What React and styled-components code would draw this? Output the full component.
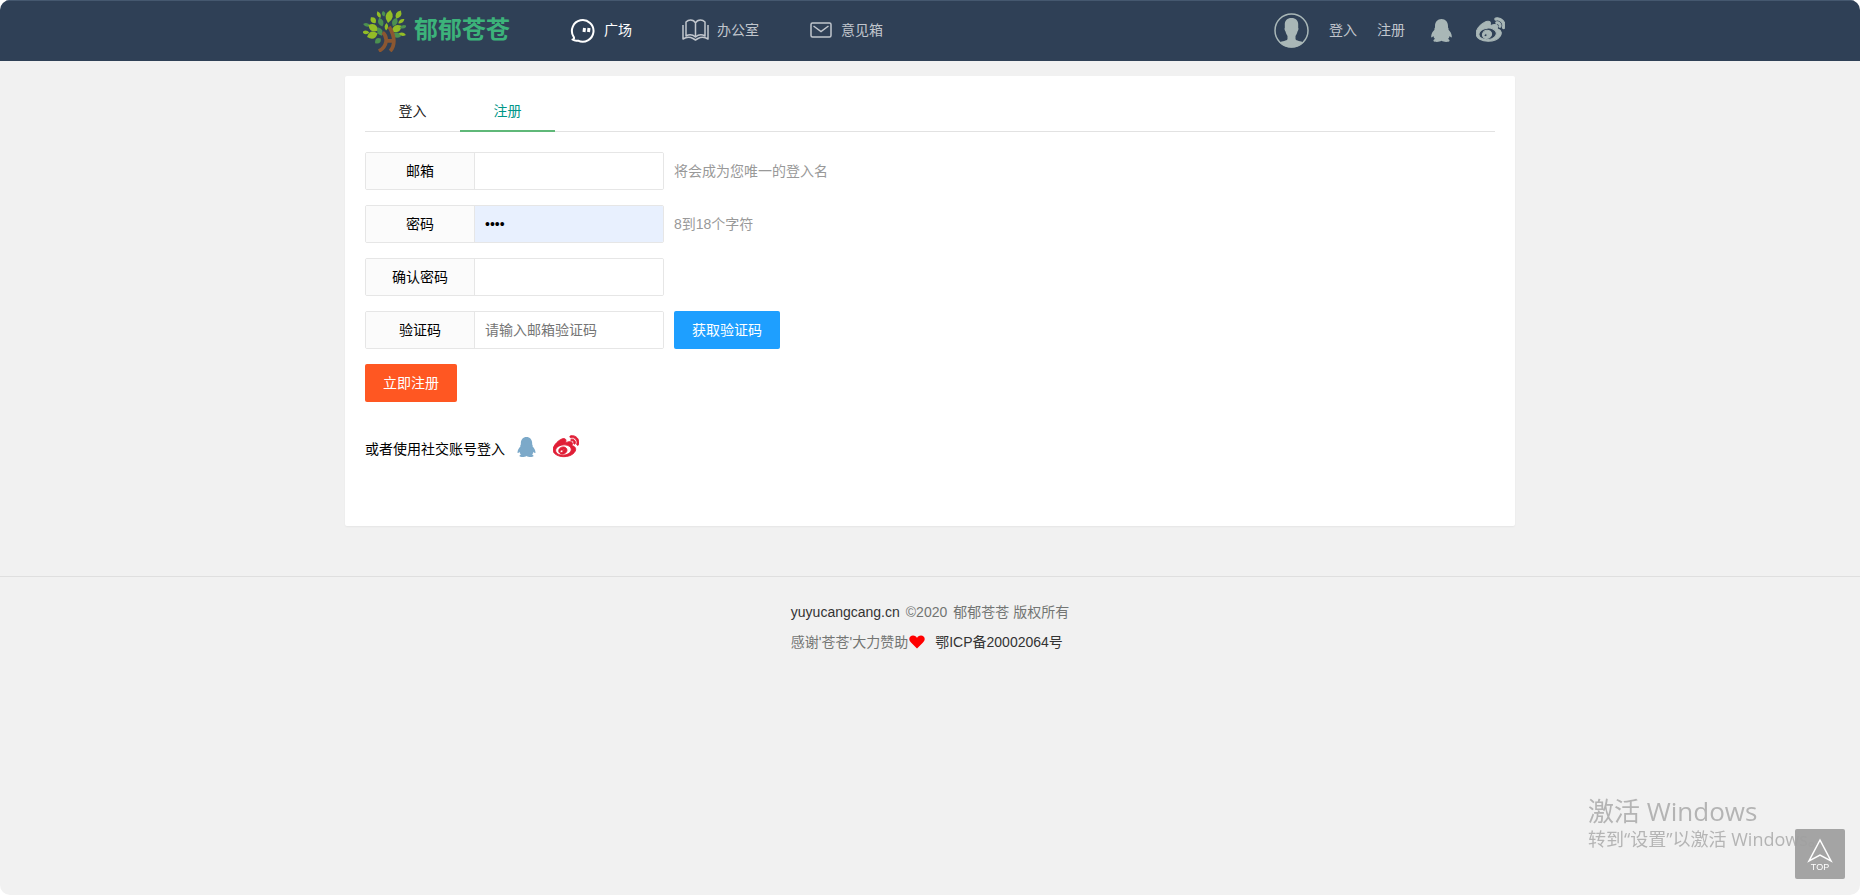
import React from 'react';
import styled, { createGlobalStyle } from 'styled-components';
import { FaWeibo } from 'react-icons/fa';

const Global = createGlobalStyle`
  * { box-sizing: border-box; }
  body {
    margin: 0;
    background: #fff;
    color: #000;
    font: 14px/24px "Liberation Sans", "Noto Sans CJK SC", sans-serif;
  }
  a { color: inherit; text-decoration: none; }
  button, input { font: inherit; }
`;

const Page = styled.div`
  min-height: 100vh;
  display: flex;
  flex-direction: column;
  background: #f1f1f1;
  border-radius: 10px;
  overflow: hidden;
`;

const Header = styled.header`
  background: #2f4056;
  border-top: 1px solid #45586f;
`;

const Container = styled.div`
  width: 100%;
  max-width: 1170px;
  margin: 0 auto;
`;

const HeaderBar = styled(Container)`
  height: 60px;
  padding: 0 10px 2px 18px;
  display: flex;
  align-items: center;
  justify-content: space-between;
`;

const Group = styled.div`
  display: flex;
  align-items: center;
`;

const Logo = styled.a`
  display: flex;
  align-items: center;
  gap: 8px;
  margin-right: 60px;
  color: #3cb37a;
  font-size: 24px;
  font-weight: 700;
  line-height: 36px;
`;

const Nav = styled.nav`
  display: flex;
  align-items: center;
  gap: 50px;
`;

const NavLink = styled.a`
  display: flex;
  align-items: center;
  gap: 8px;
  color: ${(p) => (p.$active ? '#fff' : '#c1c6cd')};
`;

const UserNav = styled.nav`
  display: flex;
  align-items: center;
  gap: 20px;
  color: #c1c6cd;
`;

const IconLink = styled.a`
  display: flex;
  color: ${(p) => p.$color || '#a9b7b7'};
`;

const SocialIcons = styled.div`
  display: flex;
  align-items: center;
  gap: ${(p) => p.$gap};
`;

const HeaderSocial = styled(SocialIcons)`
  padding-left: 6px;
`;

const Panel = styled(Container).attrs({ as: 'main' })`
  min-height: 450px;
  margin-top: 15px;
  padding: 15px 20px;
  background: #fff;
  border-radius: 2px;
  box-shadow: 0 1px 2px rgba(0, 0, 0, 0.05);
`;

const Tabs = styled.nav`
  display: flex;
  height: 41px;
  border-bottom: 1px solid #e2e2e2;
`;

const Tab = styled.a`
  width: 95px;
  height: 41px;
  line-height: 40px;
  text-align: center;
  color: ${(p) => (p.$active ? '#009688' : '#222')};
  border-bottom: ${(p) => (p.$active ? '2px solid #5fb878' : '0')};
`;

const Form = styled.form`
  display: flex;
  flex-direction: column;
  align-items: flex-start;
  gap: 15px;
  padding-top: 20px;
`;

const Row = styled.div`
  display: flex;
  align-items: center;
  gap: 10px;
`;

const Field = styled.div`
  display: flex;
  width: 299px;
  height: 38px;
  border: 1px solid #e6e6e6;
  border-radius: 2px;
  overflow: hidden;
`;

const Label = styled.label`
  width: 109px;
  flex: none;
  line-height: 36px;
  text-align: center;
  background: #fbfbfb;
  border-right: 1px solid #e6e6e6;
`;

const Input = styled.input`
  flex: 1;
  min-width: 0;
  border: 0;
  outline: 0;
  padding: 0 10px;
  background: ${(p) => (p.$filled ? '#e8f0fe' : '#fff')};
  &::placeholder { color: #757575; }
`;

const Hint = styled.span`
  color: #999;
`;

const Button = styled.button`
  height: 38px;
  padding: 0 18px;
  border: 0;
  border-radius: 2px;
  color: #fff;
  background: ${(p) => p.$color};
  cursor: pointer;
`;

const Social = styled.div`
  display: flex;
  align-items: flex-start;
  gap: 12px;
  padding-top: 17px;
  line-height: 30px;
`;

const Footer = styled.footer`
  margin-top: 50px;
  padding: 20px 15px;
  border-top: 1px solid #dfdfdf;
  display: flex;
  justify-content: center;
  color: #737573;
  line-height: 30px;
`;

const FooterLine = styled.div`
  display: flex;
  align-items: center;
  gap: ${(p) => p.$gap || '6px'};
  a { color: #333; }
`;

const Thanks = styled.span`
  display: flex;
  align-items: center;
  gap: 1px;
`;

const Watermark = styled.aside`
  position: fixed;
  right: 38px;
  bottom: 44px;
  width: 234px;
  color: #b4b4b4;
  font-family: "Open Sans", "Noto Sans CJK SC", sans-serif;
  white-space: nowrap;
  pointer-events: none;
`;

const WatermarkTitle = styled.div`
  font-size: 26px;
  line-height: 32px;
`;

const WatermarkText = styled.div`
  font-size: 18px;
  line-height: 24px;
`;

const TopButton = styled.button`
  position: fixed;
  right: 15px;
  bottom: 16px;
  width: 50px;
  height: 50px;
  padding: 0;
  border: 0;
  border-radius: 2px;
  background: rgba(159, 159, 159, 0.95);
  color: #fff;
  display: flex;
  flex-direction: column;
  align-items: center;
  justify-content: center;
  font-size: 9px;
  line-height: 8px;
  cursor: pointer;
`;

const leaves = [
  [28, 8, 10, 4, 7, 1], [17, 6, -25, 2, 4, 1], [38, 6, 30, 3, 5, 1], [11, 12, -40, 3, 4, 1],
  [19, 14, -20, 3, 5, 0], [34, 14, 25, 3, 5, 0], [41, 13, 55, 2, 4, 1], [4, 17, -75, 2, 4, 0],
  [11, 20, -60, 4, 6, 1], [3, 25, -85, 2, 4, 1], [10, 28, -110, 4, 6, 1], [18, 24, -25, 3, 5, 0],
  [36, 21, 60, 4, 6, 1], [43, 19, 75, 2, 4, 0], [36, 28, 100, 3, 5, 0], [42, 27, 100, 2, 4, 1],
  [16, 34, -130, 3, 4, 0], [25, 19, 5, 2, 4, 1], [22, 5, -12, 2, 3, 0],
];

const Tree = () => (
  <svg width="43" height="43" viewBox="0 0 46 46" aria-hidden="true">
    {leaves.map(([x, y, r, w, h, light]) => (
      <path
        key={`${x}-${y}`}
        transform={`translate(${x} ${y}) rotate(${r})`}
        d={`M0 ${-h}Q${w * 1.9} 0 0 ${h}Q${-w * 1.9} 0 0 ${-h}Z`}
        fill={light ? '#93bd26' : '#4c9150'}
      />
    ))}
    <path d="M21 25C27 30 26 40 17 45M28 19C31 24 33 29 33 34C33 39 31 43 29 45M24 34H33" fill="none" stroke="#8b5731" strokeWidth="4" />
  </svg>
);

const Chat = () => (
  <svg width="26" height="25" viewBox="0 0 26 25" aria-hidden="true">
    <path d="M3.500 18.500A10.800 10.800 0 1 1 8 22.600Q5 23.300 2.500 21.500Q5 21 3.500 18.500" fill="none" stroke="#fff" strokeWidth="2" strokeLinejoin="round" />
    <path d="M14.500 10L14 14M19 10L18.500 14" stroke="#fff" strokeWidth="3" />
  </svg>
);

const Book = () => (
  <svg width="27" height="22" viewBox="0 0 27 22" fill="none" stroke="#c1c6cd" strokeWidth="1.500" strokeLinejoin="round" aria-hidden="true">
    <path d="M13.500 4Q12 1 8.500 1Q6 1 4 3V17Q9 14 13.500 18Q18 14 23 17V3Q21 1 18.500 1Q15 1 13.500 4V18" />
    <path d="M1 6V20Q6 17 11 19.500L13.500 21L16 19.500Q21 17 26 20V6" />
  </svg>
);

const Mail = () => (
  <svg width="24" height="16" viewBox="0 0 24 16" fill="none" stroke="#c1c6cd" strokeWidth="1.500" aria-hidden="true">
    <rect x="2" y="1" width="20" height="14" rx="1.500" />
    <path d="M4.500 4L12 9.500L19.500 4" />
  </svg>
);

const Avatar = () => (
  <svg width="35" height="35" viewBox="0 0 35 35" aria-hidden="true">
    <circle cx="17.500" cy="17.500" r="16.500" fill="none" stroke="#a9b7b7" strokeWidth="1.500" />
    <path d="M17.500 5C22 5 24.500 8 24.200 12V15C25 15.500 24 18 23.500 18.500C23 21 22 22 21.500 23V26C22 28 27 28 29.500 29.500A17 17 0 0 1 5.500 29.500C8 28 13 28 13.500 26V23C13 22 12 21 11.500 18.500C11 18 10 15.500 10.800 15V12C10.500 8 13 5 17.500 5Z" fill="#a9b7b7" />
  </svg>
);

const Penguin = ({ width, height }) => (
  <svg width={width} height={height} viewBox="0 0 21 23" fill="currentColor" aria-hidden="true">
    <path d="M10.500 0C14.500 0 17 3 17 7V8.500C17.700 9.200 17.700 10 17.500 10.800C19.500 12.500 21 15.500 20.800 18C20.500 19 19.500 18.200 18.700 17C18.400 18.300 17.800 19.200 17 20C18.300 20.600 18.800 21.200 18.500 22C17.500 23.300 12.500 23.200 10.500 21.800C8.500 23.200 3.500 23.300 2.500 22C2.200 21.200 2.700 20.600 4 20C3.200 19.200 2.600 18.300 2.300 17C1.500 18.200 0.500 19 0.200 18C0 15.500 1.500 12.500 3.500 10.800C3.300 10 3.300 9.200 4 8.500V7C4 3 6.500 0 10.500 0Z" />
  </svg>
);

const Weibo = ({ size }) => <FaWeibo size={size} stroke="currentColor" strokeWidth={18} />;

const Heart = () => (
  <svg width="16" height="14" viewBox="0 0 16 14" aria-hidden="true">
    <path d="M8 13.500L2 7.500C-1.500 4 1 0.500 4 0.500C6 0.500 7.500 1.500 8 3C8.500 1.500 10 0.500 12 0.500C15 0.500 17.500 4 14 7.500Z" fill="#f00" />
  </svg>
);

const Arrow = () => (
  <svg width="26" height="25" viewBox="0 0 26 25" fill="none" stroke="#fff" strokeWidth="1.500" aria-hidden="true">
    <path d="M13 2L24 23L13 17L2 23Z" />
  </svg>
);

const fields = [
  { id: 'email', label: '邮箱', type: 'email', hint: '将会成为您唯一的登入名' },
  { id: 'password', label: '密码', type: 'password', value: '1234', hint: '8到18个字符' },
  { id: 'confirm', label: '确认密码', type: 'password' },
  { id: 'code', label: '验证码', type: 'text', placeholder: '请输入邮箱验证码', action: '获取验证码' },
];

export default function App() {
  return (
    <Page>
      <Global />
      <Header>
        <HeaderBar>
          <Group>
            <Logo href="#"><Tree />郁郁苍苍</Logo>
            <Nav>
              <NavLink href="#" $active><Chat />广场</NavLink>
              <NavLink href="#"><Book />办公室</NavLink>
              <NavLink href="#"><Mail />意见箱</NavLink>
            </Nav>
          </Group>
          <UserNav>
            <IconLink href="#" aria-label="用户"><Avatar /></IconLink>
            <a href="#">登入</a>
            <a href="#">注册</a>
            <HeaderSocial $gap="24px">
              <IconLink href="#" aria-label="QQ"><Penguin width={21} height={23} /></IconLink>
              <IconLink href="#" aria-label="微博"><Weibo size={29} /></IconLink>
            </HeaderSocial>
          </UserNav>
        </HeaderBar>
      </Header>
      <Panel>
        <Tabs>
          <Tab href="#">登入</Tab>
          <Tab href="#" $active>注册</Tab>
        </Tabs>
        <Form onSubmit={(e) => e.preventDefault()}>
          {fields.map((f) => (
            <Row key={f.id}>
              <Field>
                <Label htmlFor={f.id}>{f.label}</Label>
                <Input id={f.id} type={f.type} defaultValue={f.value} placeholder={f.placeholder} $filled={Boolean(f.value)} />
              </Field>
              {f.hint && <Hint>{f.hint}</Hint>}
              {f.action && <Button type="button" $color="#1e9fff">{f.action}</Button>}
            </Row>
          ))}
          <Button type="submit" $color="#ff5722">立即注册</Button>
          <Social>
            <span>或者使用社交账号登入</span>
            <SocialIcons $gap="17px">
              <IconLink href="#" aria-label="QQ" $color="#7ca9c9"><Penguin width={19} height={20} /></IconLink>
              <IconLink href="#" aria-label="微博" $color="#e01e36"><Weibo size={26} /></IconLink>
            </SocialIcons>
          </Social>
        </Form>
      </Panel>
      <Footer>
        <div>
          <FooterLine>
            <a href="#">yuyucangcang.cn</a>
            <span>©2020</span>
            <span>郁郁苍苍 版权所有</span>
          </FooterLine>
          <FooterLine $gap="10px">
            <Thanks>感谢'苍苍'大力赞助<Heart /></Thanks>
            <a href="#">鄂ICP备20002064号</a>
          </FooterLine>
        </div>
      </Footer>
      <Watermark>
        <WatermarkTitle>激活 Windows</WatermarkTitle>
        <WatermarkText>转到“设置”以激活 Windows。</WatermarkText>
      </Watermark>
      <TopButton type="button"><Arrow />TOP</TopButton>
    </Page>
  );
}
